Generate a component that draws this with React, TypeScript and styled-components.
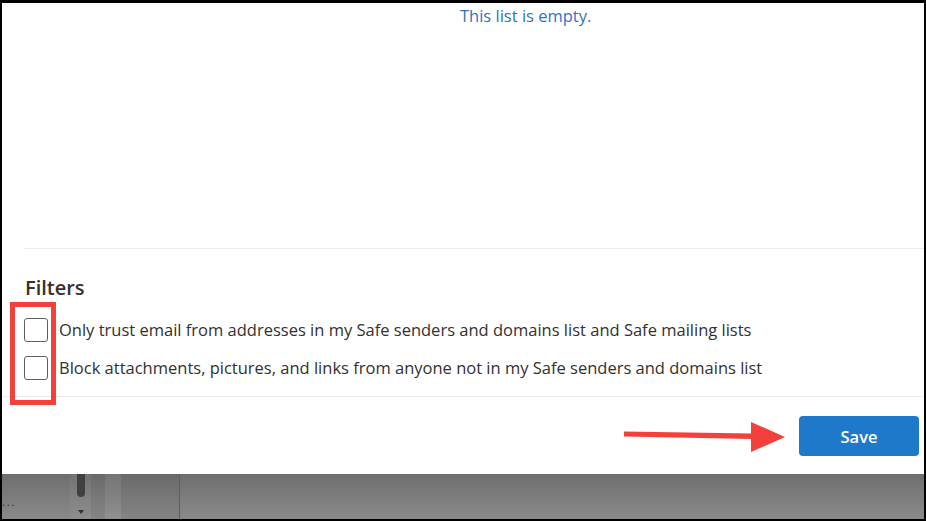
import * as React from 'react';
import styled, { createGlobalStyle } from 'styled-components';

const GlobalStyle = createGlobalStyle`
  html, body {
    margin: 0;
    padding: 0;
    background: #000;
  }
  * {
    box-sizing: border-box;
  }
`;

const Frame = styled.div`
  position: relative;
  width: 926px;
  height: 521px;
  padding: 3px 2px 2px 2px;
  background: #000;
  display: flex;
  flex-direction: column;
  font-family: 'Open Sans', 'Noto Sans', sans-serif;
  color: #323130;
`;

const Dialog = styled.div`
  height: 471px;
  background: #fff;
  display: flex;
  flex-direction: column;
`;

const EmptyArea = styled.div`
  height: 246px;
  margin-left: 22px;
  border-bottom: 1px solid #ebebeb;
  padding: 1px 0 0 436px;
`;

const EmptyText = styled.span`
  font-size: 16.5px;
  line-height: 24px;
  color: #2f72c4;
`;

const FiltersSection = styled.section`
  margin-left: 22px;
  padding: 25px 0 10px;
  display: flex;
  flex-direction: column;
`;

const SectionTitle = styled.h2`
  margin: 0 0 8px 1px;
  font-size: 20px;
  line-height: 28px;
  font-weight: 600;
  color: #323130;
`;

const OptionRow = styled.label`
  height: 38px;
  display: flex;
  align-items: center;
  gap: 11px;
  padding-top: 1px;
  font-size: 16.5px;
  color: #323130;
  white-space: nowrap;
`;

const Box = styled.span`
  width: 24px;
  height: 24px;
  flex: none;
  border: 1px solid #5f5f5f;
  border-radius: 3px;
  background: #fff;
`;

const Footer = styled.div`
  border-top: 1px solid #ebebeb;
  padding: 19px 5px 18px;
  display: flex;
  justify-content: flex-end;
`;

const SaveButton = styled.button`
  width: 120px;
  height: 40px;
  padding-top: 1px;
  border: none;
  border-radius: 4px;
  background: #1f79cb;
  color: #fff;
  font-family: inherit;
  font-size: 16.5px;
  font-weight: 600;
  cursor: pointer;
`;

const Backdrop = styled.div`
  flex: 1;
  display: flex;
  background: linear-gradient(#6e6e6e, #8a8a8a);
`;

const Column = styled.div<{ $w: number; $tone?: string; $edge?: boolean }>`
  position: relative;
  width: ${(p) => p.$w}px;
  flex: none;
  background: ${(p) => p.$tone || 'transparent'};
  border-right: ${(p) => (p.$edge ? '1px solid #5e5e5e' : 'none')};
`;

const Dots = styled.span`
  display: block;
  margin: 26px 0 0 0;
  font-size: 11px;
  line-height: 6px;
  letter-spacing: 1px;
  color: #2e2e2e;
  font-family: 'DejaVu Sans', sans-serif;
`;

const ScrollThumb = styled.div`
  position: absolute;
  left: 7px;
  top: 0;
  width: 8px;
  height: 23px;
  border-radius: 0 0 4px 4px;
  background: #404040;
`;

const ScrollArrow = styled.div`
  position: absolute;
  left: 8px;
  top: 36px;
  width: 0;
  height: 0;
  border-left: 3px solid transparent;
  border-right: 3px solid transparent;
  border-top: 4px solid #333;
`;

const Highlight = styled.div`
  position: absolute;
  left: 10px;
  top: 302px;
  width: 46px;
  height: 103px;
  border: 5px solid #f4403a;
  pointer-events: none;
`;

const ArrowSvg = styled.svg`
  position: absolute;
  left: 620px;
  top: 418px;
  pointer-events: none;
`;

const options = [
  'Only trust email from addresses in my Safe senders and domains list and Safe mailing lists',
  'Block attachments, pictures, and links from anyone not in my Safe senders and domains list',
];

export default function App(): JSX.Element {
  return (
    <Frame>
      <GlobalStyle />
      <Dialog>
        <EmptyArea>
          <EmptyText>This list is empty.</EmptyText>
        </EmptyArea>
        <FiltersSection>
          <SectionTitle>Filters</SectionTitle>
          {options.map((text) => (
            <OptionRow key={text}>
              <Box />
              {text}
            </OptionRow>
          ))}
        </FiltersSection>
        <Footer>
          <SaveButton>Save</SaveButton>
        </Footer>
      </Dialog>
      <Backdrop>
        <Column $w={68}>
          <Dots>...</Dots>
        </Column>
        <Column $w={21} $tone="rgba(255,255,255,0.04)">
          <ScrollThumb />
          <ScrollArrow />
        </Column>
        <Column $w={14} $tone="rgba(0,0,0,0.03)" />
        <Column $w={16} $tone="rgba(255,255,255,0.05)" />
        <Column $w={59} $tone="rgba(0,0,0,0.04)" $edge />
      </Backdrop>
      <Highlight />
      <ArrowSvg width="170" height="40" viewBox="620 418 170 40">
        <polygon points="624,431.5 752,433.5 752,439 624,436.5" fill="#f4403a" />
        <polygon points="751,422 785,437 751,452" fill="#f4403a" />
      </ArrowSvg>
    </Frame>
  );
}
